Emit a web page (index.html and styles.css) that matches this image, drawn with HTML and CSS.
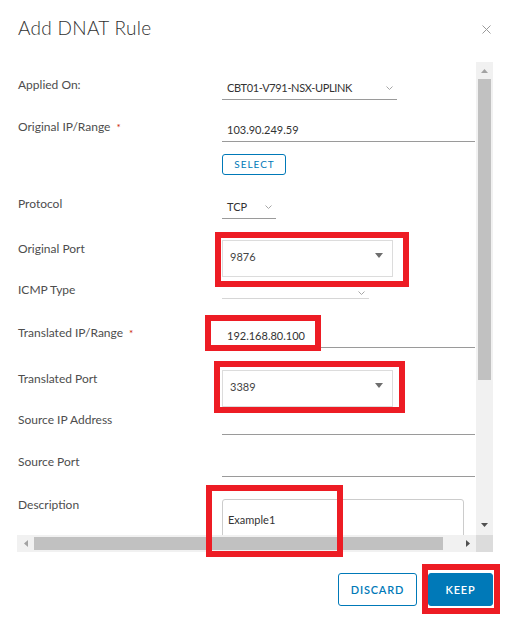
FILE: index.html
```html
<!DOCTYPE html>
<html lang="en">
<head>
<meta charset="utf-8">
<title>Add DNAT Rule</title>
<link rel="stylesheet" href="styles.css">
</head>
<body>
<div class="dialog">
  <header class="head">
    <h1 class="title">Add DNAT Rule</h1>
    <button class="close" aria-label="Close">
      <svg width="9" height="9" viewBox="0 0 9 9"><path d="M0.5 0.5 L8.5 8.5 M8.5 0.5 L0.5 8.5" stroke="#9a9a9a" stroke-width="1" fill="none"/></svg>
    </button>
  </header>

  <div class="frame">
    <div class="viewport">
      <div class="form">
        <div class="row r-applied">
          <div class="label">Applied On:</div>
          <div class="line w-applied"><span>CBT01-V791-NSX-UPLINK</span><svg class="chev" width="7" height="4" viewBox="0 0 7 4"><polyline points="0.5,0.5 3.5,3.5 6.5,0.5" fill="none" stroke="#a6a6a6" stroke-width="1"/></svg></div>
        </div>
        <div class="row r-origip">
          <div class="label">Original IP/Range<span class="req">*</span></div>
          <div class="ctl">
            <div class="line w-full"><span>103.90.249.59</span></div>
            <button class="sel-btn">SELECT</button>
          </div>
        </div>
        <div class="row r-proto">
          <div class="label">Protocol</div>
          <div class="line w-proto"><span>TCP</span><svg class="chev" width="7" height="4" viewBox="0 0 7 4"><polyline points="0.5,0.5 3.5,3.5 6.5,0.5" fill="none" stroke="#a6a6a6" stroke-width="1"/></svg></div>
        </div>
        <div class="row r-oport">
          <div class="label">Original Port</div>
          <div class="combo"><span>9876</span><svg class="tri" width="8" height="5" viewBox="0 0 8 5"><polygon points="0,0 8,0 4,5" fill="#6e6e6e"/></svg></div>
        </div>
        <div class="row r-icmp">
          <div class="label">ICMP Type</div>
          <div class="line line-dis w-icmp"><span></span><svg class="chev" width="7" height="4" viewBox="0 0 7 4"><polyline points="0.5,0.5 3.5,3.5 6.5,0.5" fill="none" stroke="#a6a6a6" stroke-width="1"/></svg></div>
        </div>
        <div class="row r-tip">
          <div class="label">Translated IP/Range<span class="req">*</span></div>
          <div class="line w-full"><span>192.168.80.100</span></div>
        </div>
        <div class="row r-tport">
          <div class="label">Translated Port</div>
          <div class="combo"><span>3389</span><svg class="tri" width="8" height="5" viewBox="0 0 8 5"><polygon points="0,0 8,0 4,5" fill="#6e6e6e"/></svg></div>
        </div>
        <div class="row r-srcip">
          <div class="label">Source IP Address</div>
          <div class="line w-full"><span>&nbsp;</span></div>
        </div>
        <div class="row r-srcport">
          <div class="label">Source Port</div>
          <div class="line w-full"><span>&nbsp;</span></div>
        </div>
        <div class="row r-desc">
          <div class="label">Description</div>
          <div class="area">Example1</div>
        </div>
      </div>
    </div>

    <div class="vbar">
      <div class="sb-btn"><svg width="7" height="4" viewBox="0 0 7 4"><polygon points="0,4 3.5,0 7,4" fill="#a3a3a3"/></svg></div>
      <div class="vthumb"></div>
      <div class="sb-fill"></div>
      <div class="sb-btn sb-down"><svg width="7" height="4" viewBox="0 0 7 4"><polygon points="0,0 7,0 3.5,4" fill="#505050"/></svg></div>
    </div>
    <div class="hbar">
      <div class="sb-btn sb-h"><svg width="4" height="7" viewBox="0 0 4 7"><polygon points="4,0 0,3.5 4,7" fill="#a3a3a3"/></svg></div>
      <div class="hthumb"></div>
      <div class="sb-fill"></div>
      <div class="sb-btn sb-h"><svg width="4" height="7" viewBox="0 0 4 7"><polygon points="0,0 4,3.5 0,7" fill="#505050"/></svg></div>
    </div>
    <div class="corner"></div>
  </div>

  <footer class="foot">
    <button class="btn btn-outline">DISCARD</button>
    <button class="btn btn-primary">KEEP</button>
  </footer>

  <div class="mark mark-oport"></div>
  <div class="mark mark-tip"></div>
  <div class="mark mark-tport"></div>
  <div class="mark mark-desc"></div>
  <div class="mark mark-keep"></div>
</div>
</body>
</html>
```

FILE: styles.css
```css
* { box-sizing: border-box; }

body {
  margin: 0;
  background: #fff;
  font-family: Lato, "Open Sans", sans-serif;
}

.dialog {
  position: relative;
  width: 511px;
  height: 622px;
  padding: 0 18px 0 17px;
}

.head {
  display: flex;
  justify-content: space-between;
  align-items: flex-start;
  height: 62px;
  padding-top: 15px;
}

.title {
  margin: 0 0 0 1px;
  font-size: 19px;
  line-height: 25px;
  font-weight: 300;
  letter-spacing: 0.3px;
  color: #313131;
}

.close {
  display: block;
  width: 9px;
  height: 9px;
  margin: 10px 2px 0 0;
  padding: 0;
  border: 0;
  background: none;
}
.close svg { display: block; }

/* scroll frame */
.frame {
  display: grid;
  grid-template-columns: 459px 17px;
  grid-template-rows: 473px 17px;
}

.viewport { overflow: hidden; }

.form { padding-top: 15px; }

.row {
  display: grid;
  grid-template-columns: 205px 1fr;
  align-items: start;
}
.r-applied { height: 42px; }
.r-origip  { height: 77px; }
.r-proto   { height: 45px; }
.r-oport   { height: 41px; }
.r-icmp    { height: 43px; }
.r-tip     { height: 46px; }
.r-tport   { height: 41px; }
.r-srcip   { height: 42px; }
.r-srcport { height: 43px; }
.r-desc    { height: 80px; }

.label {
  padding-left: 1px;
  font-size: 12px;
  line-height: 16px;
  color: #4d4d4d;
  white-space: nowrap;
}
.req {
  margin-left: 6px;
  font-size: 10px;
  color: #c92100;
}

.line {
  display: flex;
  justify-content: space-between;
  align-items: flex-start;
  margin-top: 3px;
  padding: 0 4px 3px 5px;
  border-bottom: 1px solid #9a9a9a;
  font-size: 11px;
  line-height: 16px;
  color: #333;
  white-space: nowrap;
}
.line-dis { border-bottom-color: #d6d6d6; }
.chev { display: block; margin-top: 6px; flex: none; }

.w-applied { width: 175px; letter-spacing: -0.35px; }
.w-proto   { width: 54px; }
.w-icmp    { width: 147px; }
.w-full    { width: 253px; }

.sel-btn {
  display: block;
  width: 64px;
  height: 21px;
  margin-top: 12px;
  padding: 0 0 0 1px;
  border: 1px solid #0079b8;
  border-radius: 3px;
  background: #fff;
  color: #0079b8;
  font-family: Lato, sans-serif;
  font-size: 10px;
  letter-spacing: 1px;
  line-height: 19px;
  text-align: center;
}

.combo {
  display: flex;
  justify-content: space-between;
  align-items: flex-start;
  width: 171px;
  height: 37px;
  margin-top: -1px;
  padding: 8px 9px 0 7px;
  border: 1px solid #dcdcdc;
  font-size: 11px;
  line-height: 16px;
  color: #444;
}
.tri { display: block; margin-top: 4px; flex: none; }

.area {
  width: 242px;
  height: 70px;
  margin-top: 2px;
  padding: 12px 5px;
  border: 1px solid #cccccc;
  border-radius: 3px;
  font-size: 11px;
  line-height: 16px;
  color: #333;
}

/* scrollbars */
.vbar {
  display: flex;
  flex-direction: column;
  background: #f1f1f1;
}
.sb-btn {
  display: flex;
  align-items: center;
  justify-content: center;
  flex: none;
  width: 17px;
  height: 17px;
}
.sb-btn svg { display: block; }
.sb-down { padding-bottom: 3px; }
.vthumb {
  flex: none;
  height: 301px;
  margin: 0 2px;
  background: #c1c1c1;
}
.sb-fill { flex: 1; }

.hbar {
  display: flex;
  background: #f1f1f1;
}
.hthumb {
  flex: none;
  width: 409px;
  height: 13px;
  margin-top: 2px;
  background: #c1c1c1;
}
.corner { background: #dcdcdc; }

/* footer */
.foot {
  display: flex;
  justify-content: flex-end;
  gap: 11px;
  padding-top: 21px;
}
.btn {
  height: 33px;
  padding: 0;
  border: 1px solid #0079b8;
  border-radius: 3px;
  font-family: Lato, sans-serif;
  font-size: 11px;
  font-weight: 600;
  letter-spacing: 0.8px;
}
.btn-outline {
  width: 79px;
  background: #fff;
  color: #0079b8;
}
.btn-primary {
  width: 65px;
  background: #0079b8;
  color: #fff;
}

/* red annotation boxes */
.mark {
  position: absolute;
  border: 6px solid #ed1c24;
  pointer-events: none;
}
.mark-oport { left: 215px; top: 232px; width: 194px; height: 55px; }
.mark-tip   { left: 205px; top: 315px; width: 116px; height: 36px; }
.mark-tport { left: 214px; top: 361px; width: 191px; height: 52px; }
.mark-desc  { left: 206px; top: 485px; width: 137px; height: 72px; }
.mark-keep  { left: 422px; top: 564px; width: 78px; height: 50px; }
```
